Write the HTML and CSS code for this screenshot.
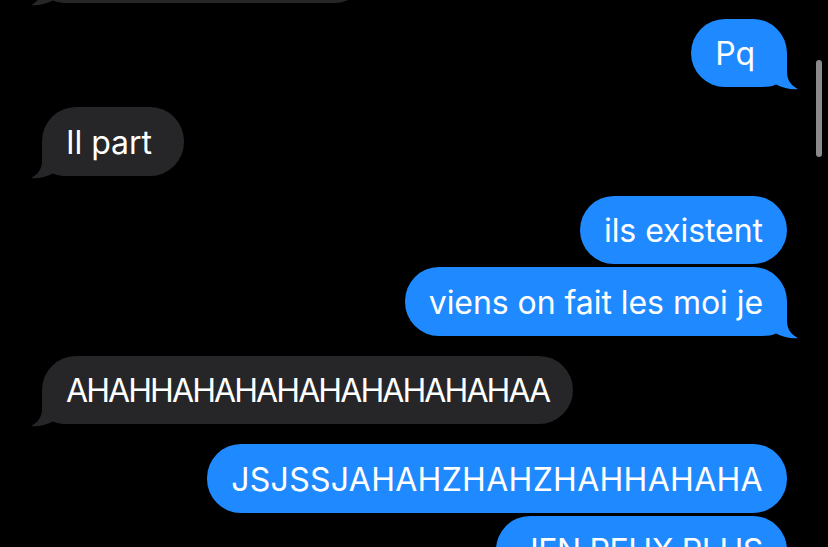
FILE: index.html
```
<!DOCTYPE html>
<html>
	<head>
		<meta charset="utf-8">
		<title>Messages</title>
		<link rel="stylesheet" href="styles.css">
	</head>
	<body>
		<div class="thread">
			<div class="msg in cut">
				<span>mdrr t’es sérieux</span>
				<svg class="tail" viewBox="0 0 52 37" width="52" height="37"><path d="M40 0 L40 19 C40 28 45 33 51 36 C45 37 36 35 29 31.5 C25 33.5 20 34 14 34 L0 34 L0 0 Z"/></svg>
			</div>
			<div class="msg out short">
				<span>Pq</span>
				<svg class="tail" viewBox="0 0 52 37" width="52" height="37"><path d="M40 0 L40 19 C40 28 45 33 51 36 C45 37 36 35 29 31.5 C25 33.5 20 34 14 34 L0 34 L0 0 Z"/></svg>
			</div>
			<div class="msg in short">
				<span>Il part</span>
				<svg class="tail" viewBox="0 0 52 37" width="52" height="37"><path d="M40 0 L40 19 C40 28 45 33 51 36 C45 37 36 35 29 31.5 C25 33.5 20 34 14 34 L0 34 L0 0 Z"/></svg>
			</div>
			<div class="msg out">
				<span>ils existent</span>
			</div>
			<div class="msg out same">
				<span>viens on fait les moi je</span>
				<svg class="tail" viewBox="0 0 52 37" width="52" height="37"><path d="M40 0 L40 19 C40 28 45 33 51 36 C45 37 36 35 29 31.5 C25 33.5 20 34 14 34 L0 34 L0 0 Z"/></svg>
			</div>
			<div class="msg in tight">
				<span>AHAHHAHAHAHAHAHAHAHAHAA</span>
				<svg class="tail" viewBox="0 0 52 37" width="52" height="37"><path d="M40 0 L40 19 C40 28 45 33 51 36 C45 37 36 35 29 31.5 C25 33.5 20 34 14 34 L0 34 L0 0 Z"/></svg>
			</div>
			<div class="msg out wide">
				<span>JSJSSJAHAHZHAHZHAHHAHAHA</span>
			</div>
			<div class="msg out same caps">
				<span>JEN PEUX PLUS</span>
				<svg class="tail" viewBox="0 0 52 37" width="52" height="37"><path d="M40 0 L40 19 C40 28 45 33 51 36 C45 37 36 35 29 31.5 C25 33.5 20 34 14 34 L0 34 L0 0 Z"/></svg>
			</div>
		</div>
		<div class="scrollbar"></div>
	</body>
</html>
```
FILE: styles.css
```
*{
	margin: 0;
	padding: 0;
}
html, body{
	height: 100%;
}
body{
	background: #000;
	overflow: hidden;
	position: relative;
	font-family: Inter, "Noto Sans", sans-serif;
}
.thread{
	display: flex;
	flex-direction: column;
	padding: 0 41px 0 42px;
}
.msg{
	position: relative;
	padding: 17.5px 24px 14.5px;
	border-radius: 34px;
	font-size: 32px;
	line-height: 36.5px;
	letter-spacing: -0.05px;
	color: #fff;
	white-space: nowrap;
	margin-top: 20px;
}
.msg span{
	position: relative;
	z-index: 1;
}
.msg.same{
	margin-top: 3px;
}
.msg.short{
	padding-right: 32px;
}
.msg.tight{
	letter-spacing: -1.9px;
}
.msg.wide{
	letter-spacing: 0.3px;
}
.msg.caps{
	letter-spacing: -0.4px;
}
.msg.in{
	align-self: flex-start;
	background: #262628;
}
.msg.out{
	align-self: flex-end;
	background: #1f8aff;
}
/* bulle coupée en haut de l'écran */
.msg.cut{
	margin-top: -66px;
	width: 278px;
}
.msg.cut + .msg{
	margin-top: 16px;
}
.tail{
	position: absolute;
	bottom: -3px;
	display: block;
}
.msg.out .tail{
	right: -12px;
	fill: #1f8aff;
}
.msg.in .tail{
	left: -12px;
	fill: #262628;
	transform: scaleX(-1);
}
.scrollbar{
	position: absolute;
	top: 60px;
	right: 6px;
	width: 6px;
	height: 97px;
	border-radius: 3px;
	background: #8a8a8a;
}
```
